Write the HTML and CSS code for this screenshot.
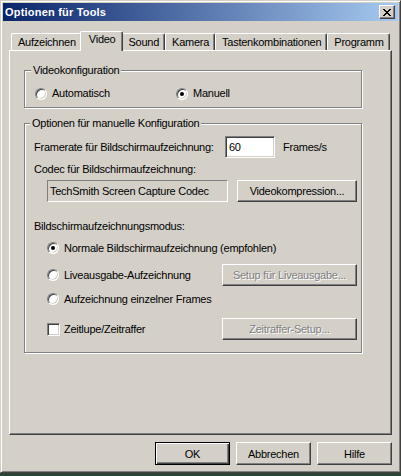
FILE: index.html
```html
<!DOCTYPE html>
<html>

<head>
  <meta charset="UTF-8">
  <title>Optionen für Tools</title>
  <link rel="stylesheet" href="styles.css">
</head>

<body>
  <div class="fenster">
    <!-- Titelleiste -->
    <div class="titelleiste">
      <span class="titel">Optionen für Tools</span>
      <span class="schliessen">
        <svg width="8" height="7" viewBox="0 0 8 7" shape-rendering="crispEdges">
          <path d="M0 0h2v1H0z M6 0h2v1H6z M1 1h2v1H1z M5 1h2v1H5z M2 2h4v1H2z M3 3h2v1H3z M2 4h4v1H2z M1 5h2v1H1z M5 5h2v1H5z M0 6h2v1H0z M6 6h2v1H6z" fill="#000"/>
        </svg>
      </span>
    </div>

    <div class="inhalt">
      <!-- Registerkarten -->
      <div class="reiter">
        <div class="reiter-item">Aufzeichnen</div>
        <div class="reiter-item aktiv">Video</div>
        <div class="reiter-item">Sound</div>
        <div class="reiter-item">Kamera</div>
        <div class="reiter-item">Tastenkombinationen</div>
        <div class="reiter-item">Programm</div>
      </div>

      <div class="seite">
        <fieldset class="gruppe gruppe-konfig">
          <legend>Videokonfiguration</legend>
          <div class="konfig-zeile">
            <label class="option"><span class="radio"></span>Automatisch</label>
            <label class="option"><span class="radio an"></span>Manuell</label>
          </div>
        </fieldset>

        <fieldset class="gruppe gruppe-manuell">
          <legend>Optionen für manuelle Konfiguration</legend>
          <div class="framerate-zeile">
            <span class="framerate-label">Framerate für Bildschirmaufzeichnung:</span>
            <span class="eingabe">60</span>
            <span class="einheit">Frames/s</span>
          </div>
          <div class="beschriftung codec-label">Codec für Bildschirmaufzeichnung:</div>
          <div class="codec-zeile">
            <div class="codec-feld">TechSmith Screen Capture Codec</div>
            <button class="knopf knopf-codec">Videokompression...</button>
          </div>
          <div class="beschriftung modus-label">Bildschirmaufzeichnungsmodus:</div>
          <div class="modi">
            <div class="modus-zeile">
              <label class="option"><span class="radio an"></span>Normale Bildschirmaufzeichnung (empfohlen)</label>
            </div>
            <div class="modus-zeile">
              <label class="option"><span class="radio"></span>Liveausgabe-Aufzeichnung</label>
              <button class="knopf knopf-setup" disabled>Setup für Liveausgabe...</button>
            </div>
            <div class="modus-zeile">
              <label class="option"><span class="radio"></span>Aufzeichnung einzelner Frames</label>
            </div>
            <div class="modus-zeile">
              <label class="option"><span class="haken"></span>Zeitlupe/Zeitraffer</label>
              <button class="knopf knopf-setup" disabled>Zeitraffer-Setup...</button>
            </div>
          </div>
        </fieldset>
      </div>

      <!-- Dialogknöpfe -->
      <div class="fusszeile">
        <button class="knopf knopf-dialog standard">OK</button>
        <button class="knopf knopf-dialog">Abbrechen</button>
        <button class="knopf knopf-dialog">Hilfe</button>
      </div>
    </div>
  </div>
</body>

</html>
```

FILE: styles.css
```css
* {
  box-sizing: border-box;
}

body {
  margin: 0;
  background-color: #2c4436;
  font-family: "Liberation Sans", Arial, sans-serif;
  font-size: 11px;
  letter-spacing: -0.25px;
  color: #000;
}

.fenster {
  width: 401px;
  height: 473px;
  background-color: #d4d0c8;
  border: 1px solid;
  border-color: #d4d0c8 #404040 #404040 #d4d0c8;
  box-shadow: inset 1px 1px #fff, inset -1px -1px #808080;
  padding: 2px;
}

.titelleiste {
  display: flex;
  align-items: center;
  justify-content: space-between;
  height: 18px;
  padding: 0 3px 0 2px;
  background: linear-gradient(to right, #0a246a, #a6caf0);
  color: #fff;
  font-weight: bold;
  letter-spacing: 0.2px;
}

.schliessen {
  display: flex;
  align-items: center;
  justify-content: center;
  width: 16px;
  height: 14px;
  background-color: #d4d0c8;
  border: 1px solid;
  border-color: #fff #404040 #404040 #fff;
  box-shadow: inset -1px -1px #808080;
}

.inhalt {
  padding: 0 6px;
}

/* Registerkarten */
.reiter {
  display: flex;
  align-items: flex-end;
  height: 29px;
  padding-left: 2px;
}

.reiter-item {
  height: 17px;
  padding: 2px 5px 0 6px;
  border-top: 1px solid #fff;
  border-left: 1px solid #fff;
  border-right: 1px solid #404040;
  border-radius: 2px 2px 0 0;
  box-shadow: inset -1px 0 #808080;
  background-color: #d4d0c8;
  white-space: nowrap;
}

.reiter-item.aktiv {
  position: relative;
  z-index: 1;
  height: 20px;
  margin: 0 -2px -1px -2px;
  padding: 1px 7px 0 8px;
}

.seite {
  height: 385px;
  border: 1px solid;
  border-color: #fff #404040 #404040 #fff;
  box-shadow: inset -1px -1px #808080;
  padding: 13px 0 0 14px;
}

/* Gruppenrahmen */
.gruppe {
  width: 338px;
  margin: 0;
  border: 1px solid #808080;
  box-shadow: inset 1px 1px #fff, 1px 1px #fff;
  min-width: 0;
}

.gruppe legend {
  line-height: 13px;
  padding: 0 2px;
  margin-left: -4px;
  background-color: #d4d0c8;
}

.gruppe-konfig {
  padding: 10px 0 7px 10px;
}

.gruppe-manuell {
  margin-top: 9px;
  padding: 6px 4px 12px 9px;
}

.konfig-zeile {
  display: grid;
  grid-template-columns: 141px auto;
  line-height: 13px;
}

.option {
  display: flex;
  align-items: center;
  line-height: 13px;
  white-space: nowrap;
}

.radio {
  display: flex;
  align-items: center;
  justify-content: center;
  width: 12px;
  height: 12px;
  margin-right: 5px;
  border-radius: 50%;
  border: 1px solid;
  border-color: #808080 #fff #fff #808080;
  box-shadow: inset 1px 1px #404040, inset -1px -1px #d4d0c8;
  background-color: #fff;
}

.radio.an::after {
  content: "";
  width: 4px;
  height: 4px;
  border-radius: 50%;
  background-color: #000;
}

.haken {
  width: 13px;
  height: 13px;
  margin-right: 4px;
  border: 1px solid;
  border-color: #808080 #fff #fff #808080;
  box-shadow: inset 1px 1px #404040, inset -1px -1px #d4d0c8;
  background-color: #fff;
}

.framerate-zeile {
  display: flex;
  align-items: center;
  height: 22px;
}

.framerate-label {
  width: 191px;
}

.eingabe {
  width: 50px;
  height: 22px;
  padding: 4px 0 0 3px;
  border: 1px solid;
  border-color: #808080 #fff #fff #808080;
  box-shadow: inset 1px 1px #404040, inset -1px -1px #d4d0c8;
  background-color: #fff;
}

.einheit {
  margin-left: 8px;
}

.beschriftung {
  line-height: 13px;
}

.codec-label {
  margin-top: 5px;
}

.codec-zeile {
  display: flex;
  margin-top: 4px;
  padding-left: 13px;
}

.codec-feld {
  width: 181px;
  height: 22px;
  padding: 4px 0 0 2px;
  border: 1px solid;
  border-color: #808080 #fff #fff #808080;
  white-space: nowrap;
}

.modus-label {
  margin-top: 18px;
}

.modi {
  display: grid;
  grid-template-rows: 27px 24px 30px 22px;
  margin-top: 4px;
  padding-left: 13px;
}

.modus-zeile {
  display: flex;
  align-items: center;
  justify-content: space-between;
  height: 22px;
}

/* Knöpfe */
.knopf {
  height: 22px;
  padding: 0;
  font-family: inherit;
  font-size: 11px;
  letter-spacing: -0.25px;
  color: #000;
  background-color: #d4d0c8;
  border: 1px solid;
  border-color: #fff #404040 #404040 #fff;
  box-shadow: inset -1px -1px #808080;
  border-radius: 0;
}

.knopf:disabled {
  color: #808080;
  text-shadow: 1px 1px #fff;
}

.knopf-codec {
  width: 120px;
  margin-left: 9px;
}

.knopf-setup {
  width: 135px;
}

.fusszeile {
  display: flex;
  justify-content: flex-end;
  gap: 6px;
  margin-top: 7px;
}

.knopf-dialog {
  width: 75px;
  height: 23px;
}

.knopf-dialog.standard {
  border-color: #000;
  box-shadow: inset 1px 1px #fff, inset -1px -1px #404040, inset -2px -2px #808080;
}
```
